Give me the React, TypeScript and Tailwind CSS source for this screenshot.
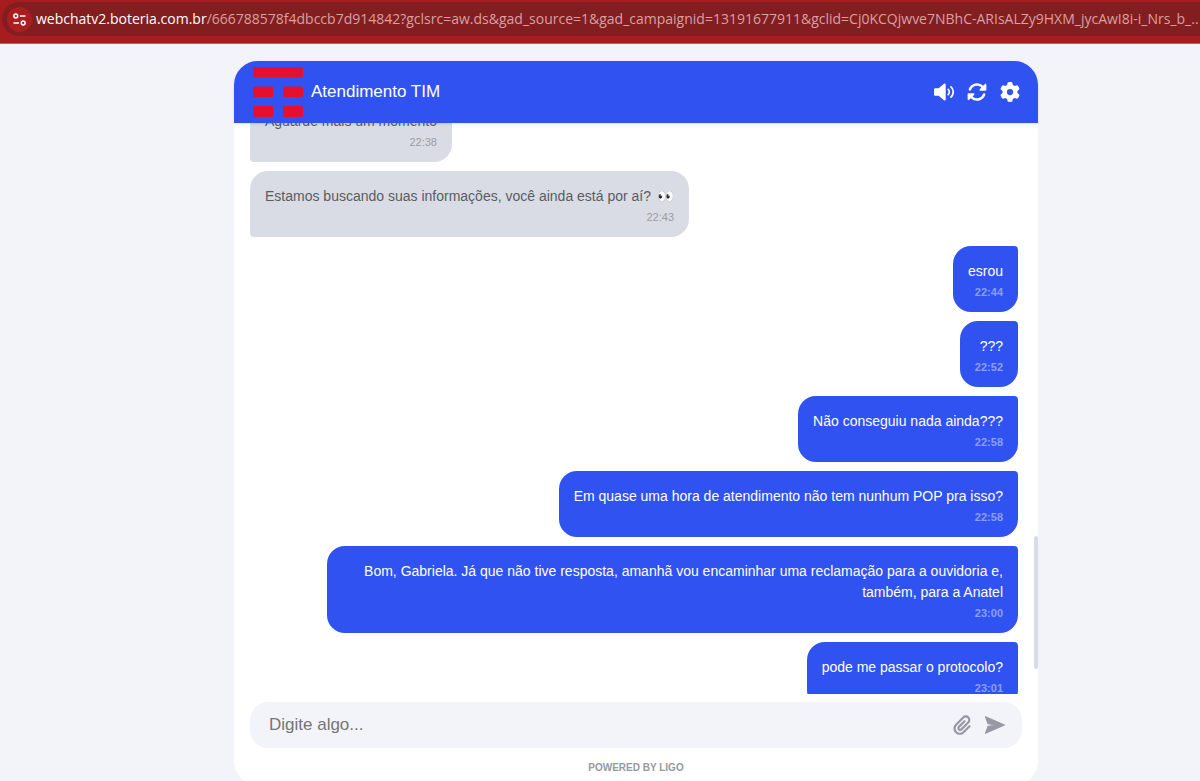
import React from 'react';
import { FaGear, FaPaperclip, FaRotate } from 'react-icons/fa6';

type Message = {
  id: number;
  from: 'bot' | 'user';
  text: string;
  emoji?: string;
  time: string;
};

const messages: Message[] = [
  { id: 1, from: 'bot', text: 'Aguarde mais um momento', time: '22:38' },
  { id: 2, from: 'bot', text: 'Estamos buscando suas informações, você ainda está por aí?', emoji: '👀', time: '22:43' },
  { id: 3, from: 'user', text: 'esrou', time: '22:44' },
  { id: 4, from: 'user', text: '???', time: '22:52' },
  { id: 5, from: 'user', text: 'Não conseguiu nada ainda???', time: '22:58' },
  { id: 6, from: 'user', text: 'Em quase uma hora de atendimento não tem nunhum POP pra isso?', time: '22:58' },
  {
    id: 7,
    from: 'user',
    text: 'Bom, Gabriela. Já que não tive resposta, amanhã vou encaminhar uma reclamação para a ouvidoria e, também, para a Anatel',
    time: '23:00',
  },
  { id: 8, from: 'user', text: 'pode me passar o protocolo?', time: '23:01' },
];

function TimLogo() {
  return (
    <svg className="h-[50px] w-[50px]" viewBox="0 0 50 50" fill="#e60f2d" aria-hidden="true">
      <rect x="0" y="0" width="50" height="10.5" rx="2" />
      <path d="M2 19.5H20V30H2a2 2 0 0 1-2-2V21.5a2 2 0 0 1 2-2z" />
      <path d="M30 19.5H48a2 2 0 0 1 2 2V28a2 2 0 0 1-2 2H30z" />
      <path d="M2 39H20V50H2a2 2 0 0 1-2-2V41a2 2 0 0 1 2-2z" />
      <path d="M30 39H48a2 2 0 0 1 2 2V48a2 2 0 0 1-2 2H30z" />
    </svg>
  );
}

function VolumeIcon() {
  return (
    <svg className="h-5 w-5" viewBox="0 0 20 20" fill="none" aria-hidden="true">
      <path
        d="M1.3 6.2H4.6L10 1.7c.7-.6 1.7-.1 1.7.8V17.5c0 .9-1 1.4-1.7.8L4.6 13.8H1.3C.6 13.8 0 13.2 0 12.5V7.5C0 6.8.6 6.2 1.3 6.2z"
        fill="currentColor"
      />
      <path d="M14.2 7.4a3.6 3.6 0 0 1 0 5.2M17 4.9a7 7 0 0 1 0 10.2" stroke="currentColor" strokeWidth="1.7" strokeLinecap="round" />
    </svg>
  );
}

function SendIcon() {
  return (
    <svg className="h-5 w-[22px]" viewBox="0 0 22 20" fill="currentColor" aria-hidden="true">
      <path
        d="M1.5 1.8 20.4 10 1.5 18.2 4 11.4 13 10 4 8.6z"
        stroke="currentColor"
        strokeWidth="1.2"
        strokeLinejoin="round"
      />
    </svg>
  );
}

function AddressBar() {
  return (
    <div className="h-11 shrink-0 border-b border-[#c9575b] bg-[#a81c1f] pt-0.5">
      <div className="ml-0.5 flex h-[34px] items-center overflow-hidden rounded-l-full bg-[#821e20] pl-[5px] font-['Open_Sans',sans-serif] text-sm">
        <button
          type="button"
          aria-label="Informações do site"
          className="flex h-[25px] w-[25px] shrink-0 items-center justify-center rounded-full bg-[#ab1d20] text-white"
        >
          <svg className="h-[13px] w-[13px]" viewBox="0 0 13 13" fill="none" stroke="currentColor" strokeWidth="1.5">
            <circle cx="2.8" cy="3" r="1.9" />
            <path d="M7 3H12.5M.5 10H6" />
            <circle cx="10.2" cy="10" r="1.9" />
          </svg>
        </button>
        <p className="ml-1 whitespace-nowrap text-[#d8a0a2]">
          <span className="text-white">webchatv2.boteria.com.br</span>
          /666788578f4dbccb7d914842?gclsrc=aw.ds&amp;gad_source=1&amp;gad_campaignid=13191677911&amp;gclid=Cj0KCQjwve7NBhC-ARIsALZy9HXM_jycAwI8i-i_Nrs_b_..
        </p>
      </div>
    </div>
  );
}

function Bubble({ message }: { message: Message }) {
  const isUser = message.from === 'user';

  return (
    <li
      className={`w-fit max-w-[90%] rounded-[18px] px-[15px] pt-[15px] pb-2.5 text-right ${
        isUser ? 'self-end rounded-tr-sm bg-[#3052f0] text-white' : 'self-start rounded-bl-sm bg-[#d9dce4] text-[#5a5c61]'
      }`}
    >
      <p className="text-sm leading-[21px]">
        {message.text}
        {message.emoji && <span className="ml-1.5">{message.emoji}</span>}
      </p>
      <time className={`block text-[11px] leading-5 ${isUser ? 'font-bold text-[#8c9ff7]' : 'text-[#9b9ea7]'}`}>
        {message.time}
      </time>
    </li>
  );
}

function App() {
  return (
    <div className="flex h-screen flex-col overflow-hidden bg-[#f3f4f9] font-['Liberation_Sans',Arial,sans-serif]">
      <AddressBar />

      <main className="mt-[17px] -mb-1 ml-[19.5%] flex min-h-0 w-[67%] flex-1 flex-col rounded-3xl bg-white">
        {/* Header */}
        <header className="z-10 flex h-[62px] shrink-0 items-center rounded-t-3xl bg-[#3052f0] pr-[18px] pl-[19px] text-white shadow">
          <TimLogo />
          <h1 className="ml-2 text-[17px]">Atendimento TIM</h1>
          <div className="ml-auto flex items-center gap-[13px]">
            <button type="button" aria-label="Som">
              <VolumeIcon />
            </button>
            <button type="button" aria-label="Reiniciar conversa">
              <FaRotate size={20} />
            </button>
            <button type="button" aria-label="Configurações">
              <FaGear size={20} />
            </button>
          </div>
        </header>

        {/* Messages */}
        <section className="relative min-h-0 flex-1 overflow-hidden pr-5 pl-4">
          <ul className="-mt-[27px] flex flex-col gap-[9px]">
            {messages.map((message) => (
              <Bubble key={message.id} message={message} />
            ))}
          </ul>
          <div className="absolute right-0 bottom-[25px] h-[133px] w-1 rounded-full bg-[#d9dce4]" />
        </section>

        {/* Composer */}
        <form className="mx-4 mt-2 flex h-[46px] shrink-0 items-center rounded-[18px] bg-[#f3f4f9] pr-4 pl-[19px] text-[#9699a5]">
          <input
            type="text"
            aria-label="Mensagem"
            placeholder="Digite algo..."
            className="min-w-0 flex-1 bg-transparent text-[17px] text-[#333] outline-none placeholder:text-[#757575]"
          />
          <button type="button" aria-label="Anexar arquivo">
            <FaPaperclip size={20} />
          </button>
          <button type="submit" aria-label="Enviar" className="ml-3">
            <SendIcon />
          </button>
        </form>

        <footer className="mt-3 mb-[9px] shrink-0 text-center text-[10px] leading-4 font-bold text-[#96999f]">POWERED BY LIGO</footer>
      </main>
    </div>
  );
}

export default App;
